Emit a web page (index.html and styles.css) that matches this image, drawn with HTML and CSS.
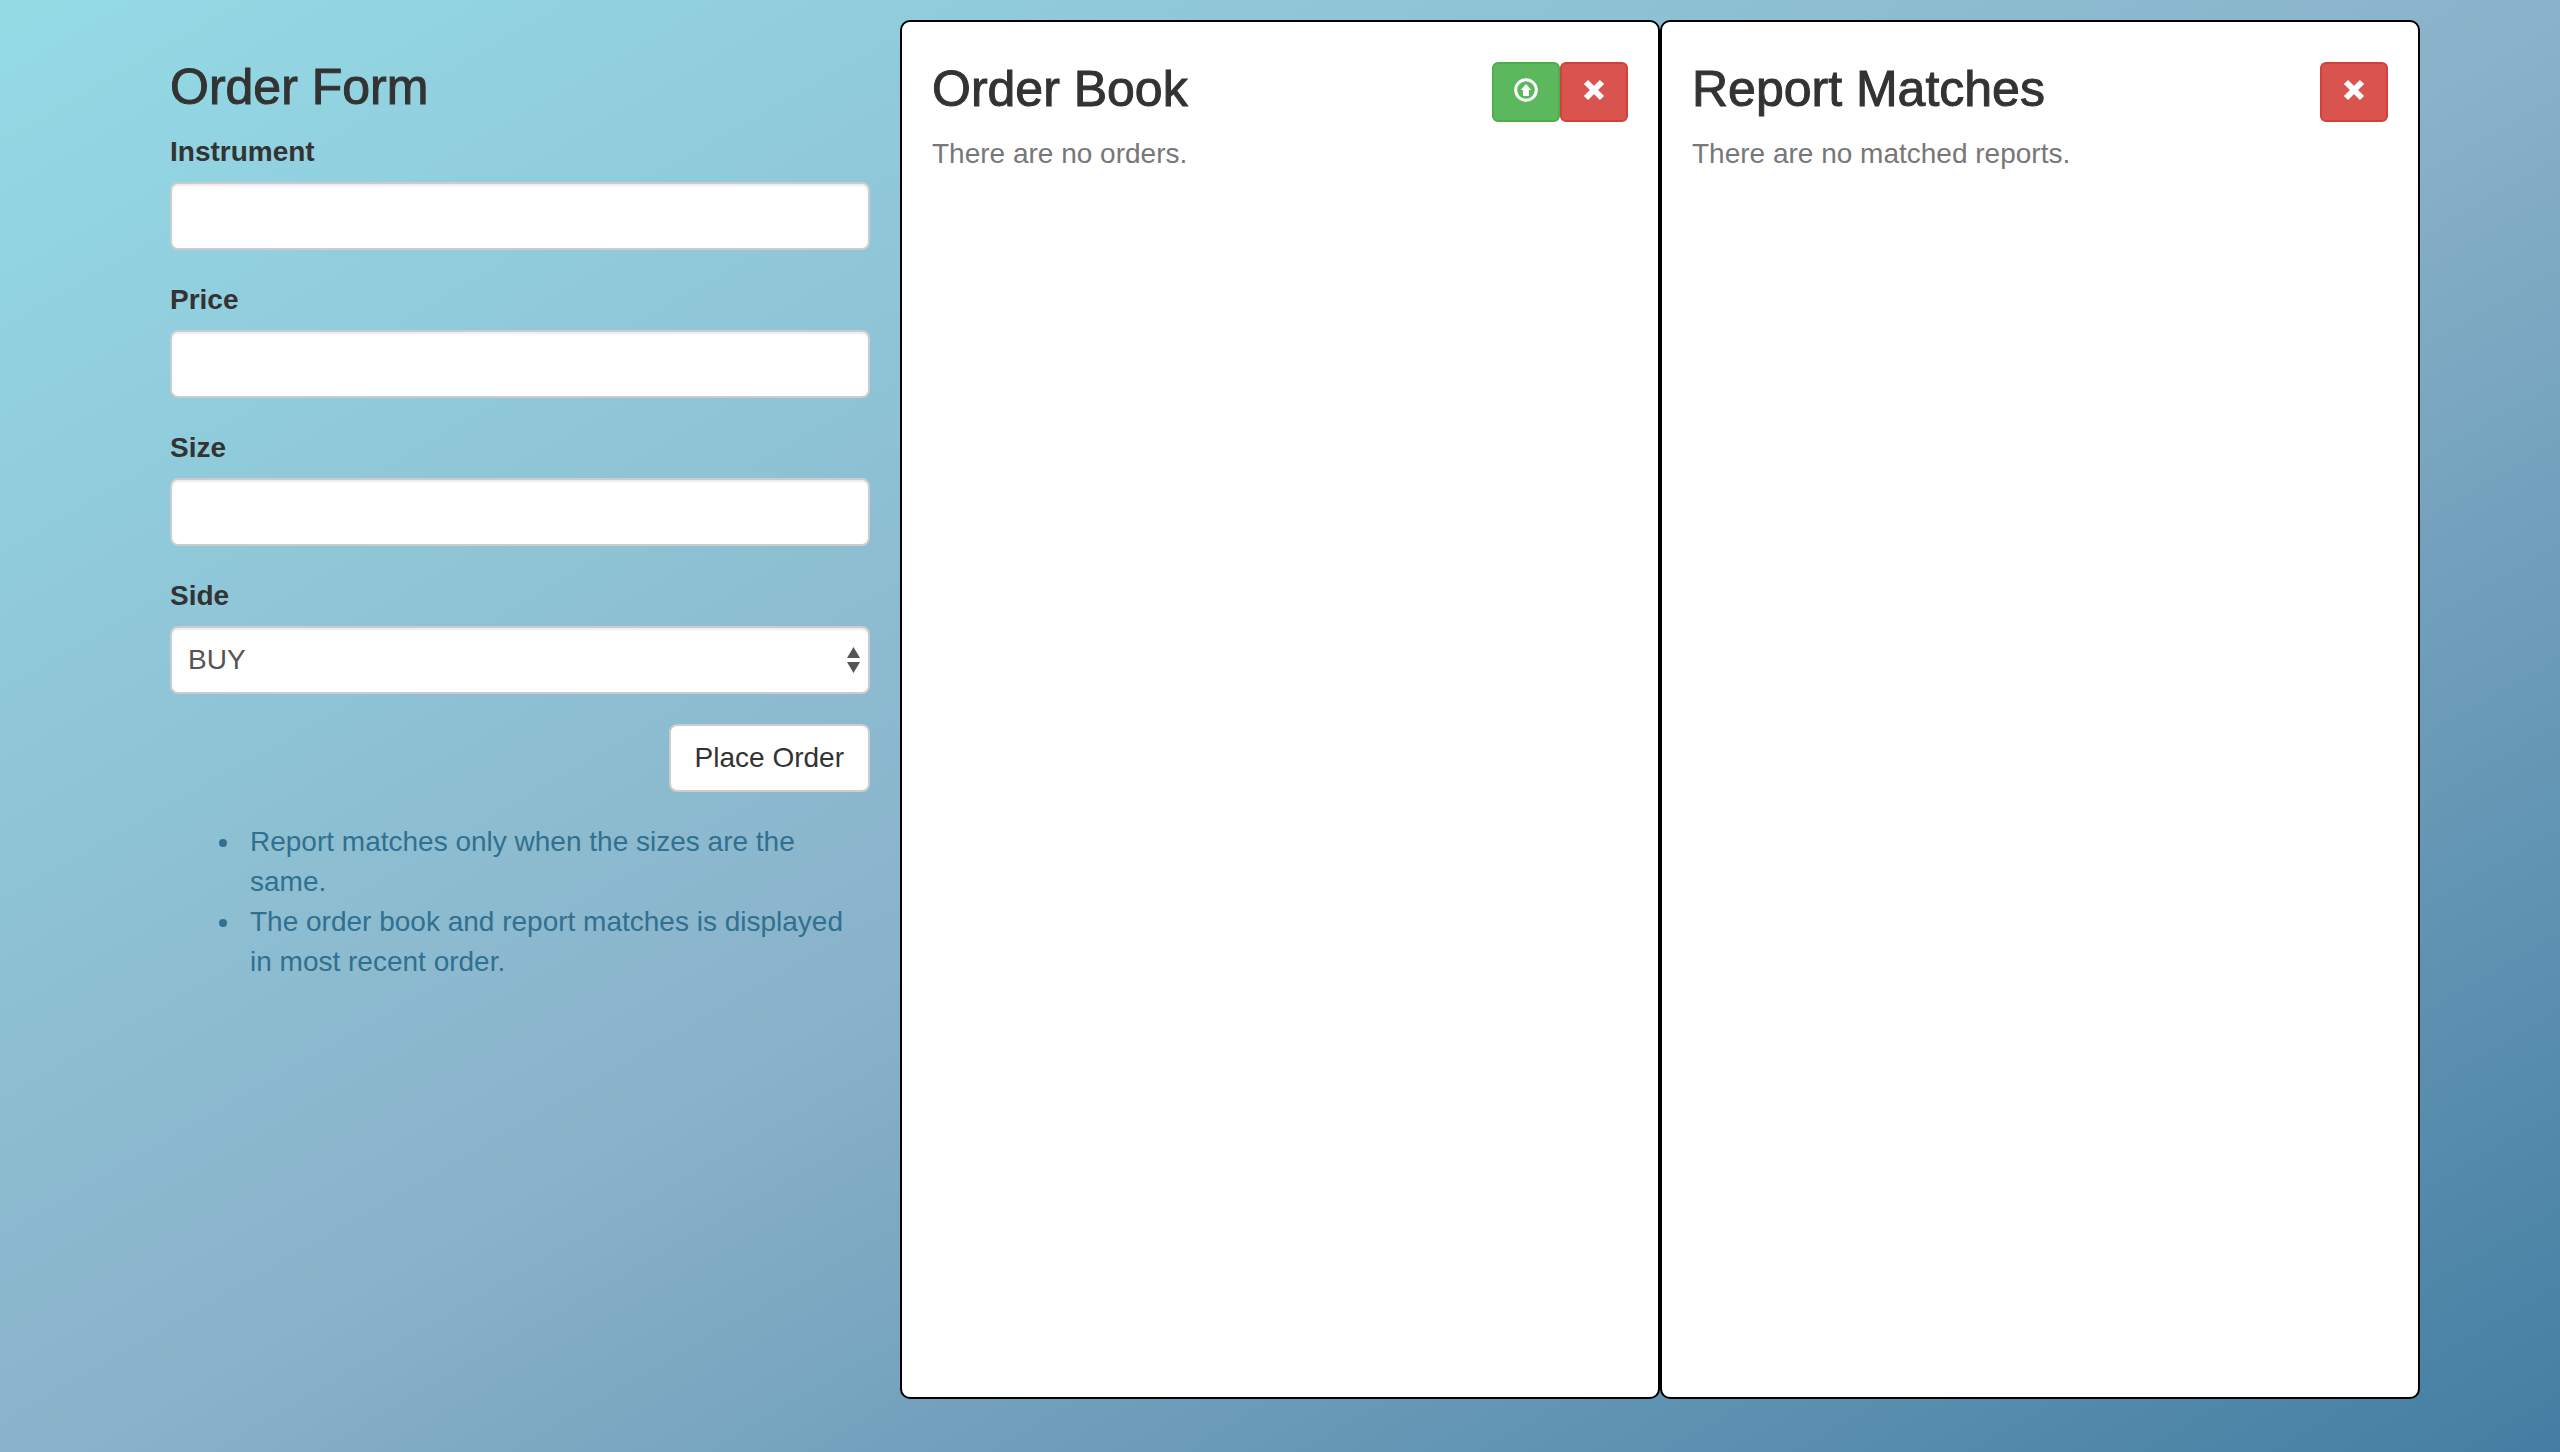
FILE: index.html
```html
<!DOCTYPE html>
<html lang="en">
<head>
  <meta charset="utf-8">
  <meta name="viewport" content="width=device-width, initial-scale=1">
  <title>Order Book</title>
  <link rel="stylesheet" href="styles.css">
</head>
<body>
  <main class="container">
    <section class="order-form">
      <h3 class="title">Order Form</h3>
      <form>
        <div class="form-group">
          <label for="instrument">Instrument</label>
          <input class="form-control" id="instrument" type="text">
        </div>
        <div class="form-group">
          <label for="price">Price</label>
          <input class="form-control" id="price" type="text">
        </div>
        <div class="form-group">
          <label for="size">Size</label>
          <input class="form-control" id="size" type="text">
        </div>
        <div class="form-group">
          <label for="side">Side</label>
          <div class="select-wrap">
            <select class="form-control" id="side">
              <option>BUY</option>
              <option>SELL</option>
            </select>
            <svg class="select-arrows" viewBox="0 0 13 26" aria-hidden="true">
              <path d="M6.500 0 13 11H0zM0 15h13L6.500 26z" fill="#555"/>
            </svg>
          </div>
        </div>
        <div class="form-actions">
          <button class="btn btn-default" type="button">Place Order</button>
        </div>
      </form>
      <ul class="notes">
        <li>Report matches only when the sizes are the same.</li>
        <li>The order book and report matches is displayed in most recent order.</li>
      </ul>
    </section>

    <section class="panel">
      <header class="panel-header">
        <h3 class="title">Order Book</h3>
        <div class="panel-actions">
          <button class="btn btn-icon btn-success" type="button" aria-label="Upload orders">
            <svg class="icon" viewBox="0 0 24 24" aria-hidden="true">
              <circle cx="12" cy="12" r="10.300" fill="none" stroke="#fff" stroke-width="3"/>
              <path d="M12 6l5.300 6H15v6H9v-6H6.700z" fill="#fff"/>
            </svg>
          </button>
          <button class="btn btn-icon btn-danger" type="button" aria-label="Clear orders">
            <svg class="icon" viewBox="0 0 24 24" aria-hidden="true">
              <path d="M4 4l16 16M20 4L4 20" stroke="#fff" stroke-width="6"/>
            </svg>
          </button>
        </div>
      </header>
      <p class="empty">There are no orders.</p>
    </section>

    <section class="panel">
      <header class="panel-header">
        <h3 class="title">Report Matches</h3>
        <div class="panel-actions">
          <button class="btn btn-icon btn-danger" type="button" aria-label="Clear matches">
            <svg class="icon" viewBox="0 0 24 24" aria-hidden="true">
              <path d="M4 4l16 16M20 4L4 20" stroke="#fff" stroke-width="6"/>
            </svg>
          </button>
        </div>
      </header>
      <p class="empty">There are no matched reports.</p>
    </section>
  </main>
</body>
</html>
```
FILE: styles.css
```css
*,
*::before,
*::after {
  box-sizing: border-box;
}

body {
  margin: 0;
  min-height: 100vh;
  padding: 20px 0;
  background: linear-gradient(150deg, #94dbe6, #8ab2ca 51%, #437ea2);
  color: #333;
  font-family: "Helvetica Neue", Helvetica, "Liberation Sans", Arial, sans-serif;
  font-size: 28px;
  line-height: 40px;
}

.container {
  display: grid;
  grid-template-columns: repeat(3, minmax(0, 1fr));
  align-items: start;
  max-width: 2280px;
  margin: 0 auto;
}

/* Medium weight headings */
.title {
  margin: 0;
  font-size: 50px;
  font-weight: 500;
  line-height: 54px;
  -webkit-text-stroke: 1px currentColor;
}

/* Order form */
.order-form {
  padding: 40px 30px 0;
}

.order-form .title {
  margin-bottom: 18px;
}

.form-group {
  margin-bottom: 30px;
}

label {
  display: block;
  margin-bottom: 10px;
  font-weight: 700;
}

.form-control {
  display: block;
  width: 100%;
  height: 68px;
  padding: 12px 16px;
  border: 2px solid #ccc;
  border-radius: 8px;
  background: #fff;
  box-shadow: inset 0 2px 2px rgba(0, 0, 0, 0.075);
  color: #555;
  font: inherit;
  appearance: none;
}

.select-wrap {
  position: relative;
}

.select-arrows {
  position: absolute;
  top: 21px;
  right: 10px;
  width: 13px;
  height: 26px;
  pointer-events: none;
}

.form-actions {
  display: flex;
  justify-content: flex-end;
  margin-bottom: 30px;
}

.notes {
  margin: 0;
  padding-left: 72px;
  color: #31708f;
}

.notes li {
  padding-left: 8px;
}

/* Buttons */
.btn {
  border: 2px solid transparent;
  border-radius: 8px;
  font: inherit;
  cursor: pointer;
}

.btn-default {
  padding: 12px 24px;
  border-color: #ccc;
  background: #fff;
  color: #333;
}

.btn-icon {
  width: 68px;
  height: 60px;
  padding: 14px 20px 18px;
  border-radius: 6px;
}

.btn-success {
  border-color: #4cae4c;
  background: #5cb85c;
}

.btn-danger {
  border-color: #d43f3a;
  background: #d9534f;
}

.icon {
  display: block;
  width: 24px;
  height: 24px;
}

/* Panels */
.panel {
  min-height: 95vh;
  padding: 40px 30px;
  border: 2px solid #000;
  border-radius: 10px;
  background: #fff;
}

.panel-header {
  display: flex;
  justify-content: space-between;
  margin-bottom: 12px;
}

.panel-actions {
  display: flex;
}

.empty {
  margin: 0;
  color: #777;
}
```
